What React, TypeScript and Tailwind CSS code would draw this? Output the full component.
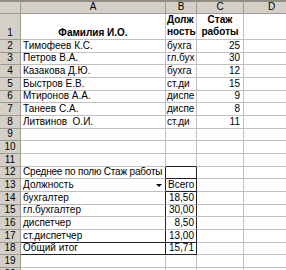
import React from 'react';
import clsx from 'clsx';

type CellProps = { children?: React.ReactNode; className?: string };

// plain worksheet cell: thin gridline on the right and bottom, text sits on the bottom edge
const Cell = ({ children, className }: CellProps) => (
  <div
    className={clsx(
      'flex items-end overflow-hidden whitespace-pre border-r border-b border-[#c0c0c0] bg-white pb-[1px] leading-[11px]',
      className
    )}>
    {children}
  </div>
);

const Head = ({ children, className }: CellProps) => (
  <div
    className={clsx(
      'flex items-end justify-center overflow-hidden border-r border-b border-[#9d9a93] bg-[#d4d0c8] pb-[1px] leading-[11px] text-black',
      className
    )}>
    {children}
  </div>
);

const staff: [string, string, number][] = [
  ['Тимофеев К.С.', 'бухга', 25],
  ['Петров В.А.', 'гл.бух', 30],
  ['Казакова Д.Ю.', 'бухга', 12],
  ['Быстров Е.В.', 'ст.ди', 15],
  ['Мтиронов А.А.', 'диспе', 9],
  ['Танеев С.А.', 'диспе', 8],
  ['Литвинов  О.И.', 'ст.ди', 11],
];

const averages: [string, string][] = [
  ['бухгалтер', '18,50'],
  ['гл.бухгалтер', '30,00'],
  ['диспетчер', '8,50'],
  ['ст.диспетчер', '13,00'],
];

export default function App() {
  return (
    <div className="h-[270px] w-[286px] overflow-hidden bg-white font-['Liberation_Sans',Arial,sans-serif] text-[10px] text-black">
      <div className="grid w-[300px] grid-cols-[21px_145px_31px_47px_56px] grid-rows-[14px_26px_13px_12px_13px_13px_12px_13px_13px_12px_13px_13px_12px_13px_13px_12px_13px_13px_12px_13px_13px]">
        {/* column letters */}
        <Head className="border-t-2 border-t-[#8f8c86]" />
        <Head className="border-t-2 border-t-[#8f8c86]">A</Head>
        <Head className="border-t-2 border-t-[#8f8c86]">B</Head>
        <Head className="border-t-2 border-t-[#8f8c86]">C</Head>
        <Head className="border-t-2 border-t-[#8f8c86]">D</Head>

        {/* row 1: titles */}
        <Head>1</Head>
        <Cell className="justify-center font-bold">Фамилия И.О.</Cell>
        <Cell className="pl-[1px] font-bold leading-[12px]">
          Долж
          {'\n'}
          ность
        </Cell>
        <Cell className="justify-center text-center font-bold leading-[12px]">
          Стаж
          {'\n'}
          работы
        </Cell>
        <Cell />

        {staff.map(([name, post, years], idx) => (
          <React.Fragment key={'staff-' + idx}>
            <Head>{idx + 2}</Head>
            <Cell className="pl-[2px]">{name}</Cell>
            <Cell className="pl-[1px]">{post}</Cell>
            <Cell className="justify-end pr-[3px]">{years}</Cell>
            <Cell />
          </React.Fragment>
        ))}

        {[9, 10].map((n) => (
          <React.Fragment key={'empty-' + n}>
            <Head>{n}</Head>
            <Cell />
            <Cell />
            <Cell />
            <Cell />
          </React.Fragment>
        ))}

        <Head>11</Head>
        <Cell />
        <Cell className="border-b-[#222]" />
        <Cell />
        <Cell />

        {/* pivot table: data field caption */}
        <Head>12</Head>
        <Cell className="border-r-[#222] bg-[#d4d0c8] pl-[2px] tracking-[-0.2px]">Среднее по полю Стаж работы</Cell>
        <Cell className="border-r-[#222] border-b-[#222]" />
        <Cell />
        <Cell />

        <Head>13</Head>
        <Cell className="relative border-r-[#222] bg-[#d4d0c8] pl-[2px]">
          Должность
          <span className="absolute right-[3px] bottom-[4px] h-0 w-0 border-x-[3px] border-t-[3px] border-x-transparent border-t-black" />
        </Cell>
        <Cell className="border-r-[#222] border-b-[#222] pl-[2px]">Всего</Cell>
        <Cell />
        <Cell />

        {averages.map(([post, avg], idx) => (
          <React.Fragment key={'avg-' + idx}>
            <Head>{idx + 14}</Head>
            <Cell className={clsx('border-r-[#222] pl-[2px]', idx === 3 && 'border-b-[#222]')}>{post}</Cell>
            <Cell className={clsx('justify-end border-r-[#222] pr-[2px]', idx === 3 && 'border-b-[#222]')}>
              {avg}
            </Cell>
            <Cell />
            <Cell />
          </React.Fragment>
        ))}

        <Head>18</Head>
        <Cell className="border-r-[#222] border-b-[#222] pl-[2px]">Общий итог</Cell>
        <Cell className="justify-end border-r-[#222] border-b-[#222] pr-[2px]">15,71</Cell>
        <Cell />
        <Cell />

        {[19, 20].map((n) => (
          <React.Fragment key={'tail-' + n}>
            <Head>{n}</Head>
            <Cell />
            <Cell />
            <Cell />
            <Cell />
          </React.Fragment>
        ))}
      </div>
    </div>
  );
}
